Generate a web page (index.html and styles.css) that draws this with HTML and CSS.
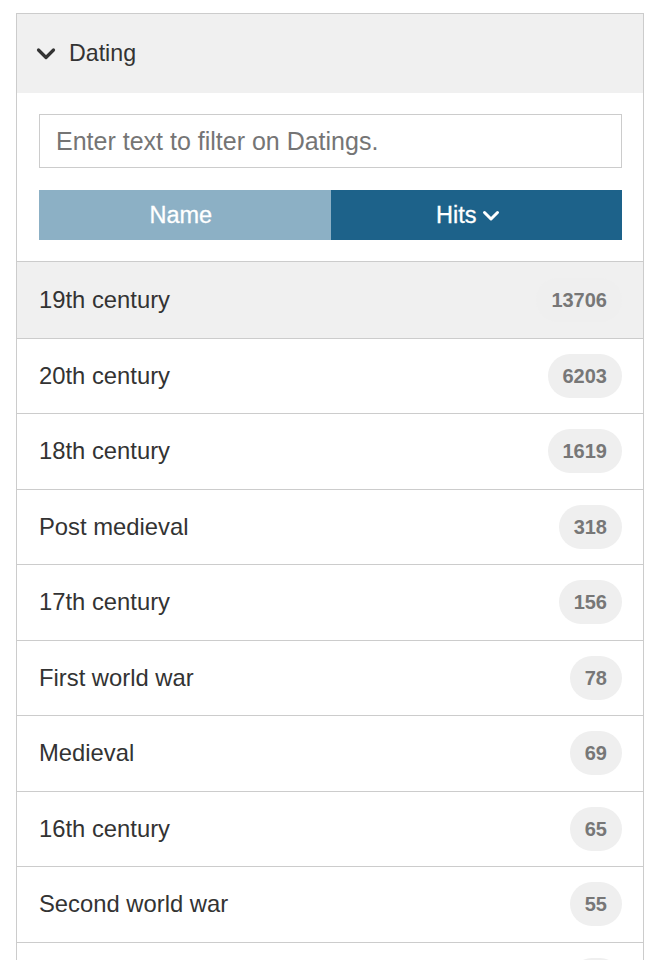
FILE: index.html
```html
<!DOCTYPE html>
<html>
<head>
<meta charset="utf-8">
<link rel="stylesheet" href="styles.css">
</head>
<body>
<div class="panel">
  <div class="panel-head">
    <svg class="chev" width="20" height="14" viewBox="0 0 20 14"><path d="M2.5 3 L10 10.5 L17.5 3" fill="none" stroke="#333" stroke-width="3.2" stroke-linecap="round" stroke-linejoin="round"/></svg>
    <span class="title">Dating</span>
  </div>
  <div class="controls">
    <input class="filter" type="text" placeholder="Enter text to filter on Datings.">
    <div class="sort">
      <button class="sort-btn name">Name</button>
      <button class="sort-btn hits">Hits <svg class="chev-sm" width="18" height="12" viewBox="0 0 18 12"><path d="M2.5 2.5 L9 9 L15.5 2.5" fill="none" stroke="#fff" stroke-width="3" stroke-linecap="round" stroke-linejoin="round"/></svg></button>
    </div>
  </div>
  <ul class="list">
    <li class="item active"><span>19th century</span><span class="badge">13706</span></li>
    <li class="item"><span>20th century</span><span class="badge">6203</span></li>
    <li class="item"><span>18th century</span><span class="badge">1619</span></li>
    <li class="item"><span>Post medieval</span><span class="badge">318</span></li>
    <li class="item"><span>17th century</span><span class="badge">156</span></li>
    <li class="item"><span>First world war</span><span class="badge">78</span></li>
    <li class="item"><span>Medieval</span><span class="badge">69</span></li>
    <li class="item"><span>16th century</span><span class="badge">65</span></li>
    <li class="item"><span>Second world war</span><span class="badge">55</span></li>
    <li class="item"><span></span><span class="badge badge-empty"></span></li>
  </ul>
</div>
</body>
</html>
```
FILE: styles.css
```css
html, body {
  margin: 0;
  padding: 0;
  background: #fff;
}
body {
  font-family: "Liberation Sans", Arial, Helvetica, sans-serif;
  color: #333;
  overflow: hidden;
  height: 960px;
}
.panel {
  margin: 13px 0 0 16px;
  width: 628px;
  box-sizing: border-box;
  border: 1px solid #cccccc;
  border-bottom: none;
}
.panel-head {
  height: 79px;
  background: #f0f0f0;
  display: flex;
  align-items: center;
  padding-left: 19px;
  box-sizing: border-box;
}
.chev {
  display: block;
  margin-right: 13px;
  margin-top: 1px;
}
.title {
  font-size: 23.2px;
  color: #333;
}
.controls {
  padding: 21px 21px 21px 22px;
  border-bottom: 1px solid #cccccc;
}
.filter {
  display: block;
  width: 100%;
  box-sizing: border-box;
  height: 54px;
  border: 1px solid #cccccc;
  padding: 0 16px;
  font-family: "Liberation Sans", Arial, sans-serif;
  font-size: 25px;
  color: #333;
  outline: none;
  border-radius: 0;
}
.filter::placeholder {
  color: #757575;
}
.sort {
  display: grid;
  grid-template-columns: 1fr 1fr;
  margin-top: 22px;
  height: 50px;
}
.sort-btn {
  border: none;
  margin: 0;
  font-family: "Liberation Sans", Arial, sans-serif;
  font-size: 23.5px;
  color: #fff;
  display: flex;
  align-items: center;
  justify-content: center;
  gap: 6px;
  padding: 0;
  -webkit-text-stroke: 0.3px #fff;
}
.name {
  background: #8cb0c5;
  padding-right: 8px;
}
.hits {
  background: #1d628a;
  padding-right: 16px;
}
.chev-sm {
  display: block;
  margin-top: 2px;
}
.list {
  list-style: none;
  margin: 0;
  padding: 0;
}
.item {
  height: 74.5px;
  box-sizing: content-box;
  border-bottom: 1px solid #cccccc;
  display: flex;
  align-items: center;
  justify-content: space-between;
  padding: 0 21px 0 22px;
  font-size: 23.8px;
  color: #333;
}
.item.active {
  background: #f0f0f0;
  height: 75.5px;
}
.badge {
  background: #efefef;
  color: #777;
  font-weight: bold;
  font-size: 20px;
  line-height: 20px;
  padding: 12px 15px;
  border-radius: 22px;
  min-width: 22px;
  text-align: center;
}
.badge-empty {
  height: 20px;
}
```
